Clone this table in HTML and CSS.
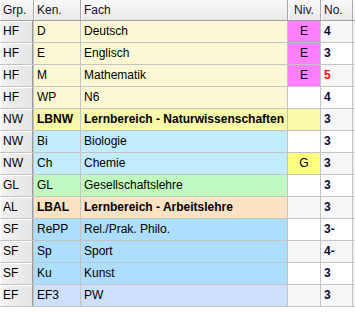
FILE: index.html
```html
<!DOCTYPE html>
<html>
<head>
<meta charset="utf-8">
<link rel="stylesheet" href="styles.css">
</head>
<body>
<div class="grid">
  <div class="row head">
    <div class="c">Grp.</div><div class="c">Ken.</div><div class="c">Fach</div><div class="c ctr">Niv.</div><div class="c">No.</div><div class="c fill"></div>
  </div>
  <div class="row hf odd">
    <div class="c grp">HF</div><div class="c k">D</div><div class="c k">Deutsch</div><div class="c ctr pink">E</div><div class="c no">4</div><div class="c fill"></div>
  </div>
  <div class="row hf">
    <div class="c grp">HF</div><div class="c k">E</div><div class="c k">Englisch</div><div class="c ctr pink">E</div><div class="c no">3</div><div class="c fill"></div>
  </div>
  <div class="row hf odd">
    <div class="c grp">HF</div><div class="c k">M</div><div class="c k">Mathematik</div><div class="c ctr pink">E</div><div class="c no red">5</div><div class="c fill"></div>
  </div>
  <div class="row hf">
    <div class="c grp">HF</div><div class="c k">WP</div><div class="c k">N6</div><div class="c ctr"></div><div class="c no">4</div><div class="c fill"></div>
  </div>
  <div class="row lbnw odd">
    <div class="c grp">NW</div><div class="c k b">LBNW</div><div class="c k b">Lernbereich - Naturwissenschaften</div><div class="c ctr k"></div><div class="c no">3</div><div class="c fill"></div>
  </div>
  <div class="row nw">
    <div class="c grp">NW</div><div class="c k">Bi</div><div class="c k">Biologie</div><div class="c ctr"></div><div class="c no">3</div><div class="c fill"></div>
  </div>
  <div class="row nw odd">
    <div class="c grp">NW</div><div class="c k">Ch</div><div class="c k">Chemie</div><div class="c ctr yel">G</div><div class="c no">3</div><div class="c fill"></div>
  </div>
  <div class="row gl">
    <div class="c grp">GL</div><div class="c k">GL</div><div class="c k">Gesellschaftslehre</div><div class="c ctr"></div><div class="c no">3</div><div class="c fill"></div>
  </div>
  <div class="row al odd">
    <div class="c grp">AL</div><div class="c k b">LBAL</div><div class="c k b">Lernbereich - Arbeitslehre</div><div class="c ctr"></div><div class="c no">3</div><div class="c fill"></div>
  </div>
  <div class="row sf">
    <div class="c grp">SF</div><div class="c k">RePP</div><div class="c k">Rel./Prak. Philo.</div><div class="c ctr"></div><div class="c no">3-</div><div class="c fill"></div>
  </div>
  <div class="row sf odd">
    <div class="c grp">SF</div><div class="c k">Sp</div><div class="c k">Sport</div><div class="c ctr"></div><div class="c no">4-</div><div class="c fill"></div>
  </div>
  <div class="row sf">
    <div class="c grp">SF</div><div class="c k">Ku</div><div class="c k">Kunst</div><div class="c ctr"></div><div class="c no">3</div><div class="c fill"></div>
  </div>
  <div class="row ef odd">
    <div class="c grp">EF</div><div class="c k">EF3</div><div class="c k">PW</div><div class="c ctr"></div><div class="c no">3</div><div class="c fill"></div>
  </div>
</div>
</body>
</html>
```
FILE: styles.css
```css
html, body {
  margin: 0;
  padding: 0;
  background: #ffffff;
}
body {
  font-family: "Liberation Sans", Arial, sans-serif;
  font-size: 12px;
  color: #000000;
}
.grid {
  width: 355px;
}
.row {
  display: grid;
  grid-template-columns: 34px 47px 207px 33px 32px 2px;
  height: 22px;
}
.c {
  box-sizing: border-box;
  border-right: 1px solid #c4c4c4;
  border-bottom: 1px solid #c4c4c4;
  padding-left: 3px;
  line-height: 21px;
  white-space: nowrap;
  overflow: hidden;
  background: #ffffff;
}
.row.odd .c {
  background: #f7f7f7;
}
.c.ctr {
  padding-left: 0;
  text-align: center;
}
.row .c.fill {
  padding: 0;
  border-right: none;
  background: #f0f0f0;
}

.row.head {
  height: 21px;
}
.row.head .c {
  line-height: 20px;
  background: linear-gradient(#f9f9f9, #e9e9e9);
  border-right: 1px solid #a8a8a8;
  border-bottom: 1px solid #a0a0a0;
  color: #1a1020;
  box-shadow: inset 1px 0 0 #ffffff;
}
.row.head .c.fill {
  border-right: none;
}

.row .c.grp {
  background: linear-gradient(to right, #f3f3f3, #e4e4e4);
  border-right: 1px solid #c4c4c4;
  box-shadow: inset -1px 0 0 #9a9a9a, inset 1px 1px 0 #ffffff;
  border-bottom: 1px solid #c4c4c4;
}

.c.no {
  font-weight: bold;
  color: #0c0c30;
}
.c.no.red {
  color: #ff1010;
}
.b {
  font-weight: bold;
}

.row.hf .c.k { background: #fbf9d3; }
.row.lbnw .c.k { background: #f9f9aa; }
.row.nw .c.k { background: #c0ecfd; }
.row.gl .c.k { background: #c1fac1; }
.row.al .c.k { background: #fde3c3; }
.row.sf .c.k { background: #addefd; }
.row.ef .c.k { background: #cde1fd; }

.row .c.pink { background: #ff80ff; }
.row .c.yel { background: #ffff80; }
```
